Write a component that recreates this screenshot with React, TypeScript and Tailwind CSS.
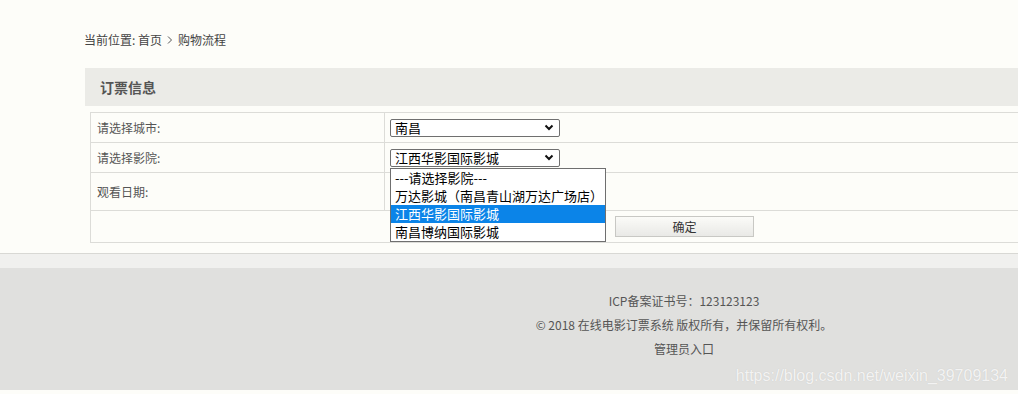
import React from "react";

const font = { fontFamily: '"Noto Sans CJK SC", "Noto Sans", sans-serif' };

function Chevron() {
  return (
    <svg width="10" height="7" viewBox="0 0 10 7" className="shrink-0">
      <path d="M1.5 1.5 L5 5 L8.5 1.5" fill="none" stroke="#111" strokeWidth="2" />
    </svg>
  );
}

function FakeSelect({ value }: { value: string }) {
  return (
    <div className="flex h-[18px] w-[170px] items-center justify-between rounded-[2px] border border-[#6f6f6f] bg-white pl-[4px] pr-[5px] text-[13px] leading-[16px] text-black">
      <span>{value}</span>
      <Chevron />
    </div>
  );
}

export default function App() {
  const cinemas = [
    "---请选择影院---",
    "万达影城（南昌青山湖万达广场店）",
    "江西华影国际影城",
    "南昌博纳国际影城",
  ];

  return (
    <div className="w-full min-h-screen overflow-hidden bg-[#fdfdf9]" style={font}>
      {/* Main content */}
      <div className="ml-[85px] w-[1200px] pt-[32px]">
        <div className="-ml-px flex items-center text-[12px] leading-[16px] text-[#444]">
          当前位置: 首页
          <svg width="10" height="10" viewBox="0 0 10 10" className="mx-[3px]">
            <path d="M3 1.5 L6.5 5 L3 8.5" fill="none" stroke="#555" strokeWidth="1" />
          </svg>
          购物流程
        </div>

        <div className="mt-[20px] flex h-[38px] items-center bg-[#ebebe7] pl-[15px] text-[14px] font-bold text-[#555]">
          订票信息
        </div>

        <table className="ml-[5px] mt-[6px] w-[1190px] border-collapse text-[12px] text-[#555]">
          <tbody>
            <tr className="h-[30px]">
              <td className="w-[294px] border border-[#dcdcd8] pl-[6px]">请选择城市:</td>
              <td className="border border-[#dcdcd8] pl-[5px]">
                <FakeSelect value="南昌" />
              </td>
            </tr>
            <tr className="h-[30px]">
              <td className="border border-[#dcdcd8] pl-[6px]">请选择影院:</td>
              <td className="border border-[#dcdcd8] pl-[5px]">
                <div className="relative">
                  <FakeSelect value="江西华影国际影城" />
                  {/* open dropdown list */}
                  <div className="absolute left-0 top-[19px] z-10 w-[216px] border border-[#6f6f6f] bg-white text-[13px] leading-[18px] text-black">
                    {cinemas.map((c, i) => (
                      <div
                        key={c}
                        className={
                          i === 2
                            ? "h-[18px] bg-[#0b84e8] pl-[4px] text-white"
                            : "h-[18px] pl-[4px]"
                        }
                      >
                        {c}
                      </div>
                    ))}
                  </div>
                </div>
              </td>
            </tr>
            <tr className="h-[38px]">
              <td className="border border-[#dcdcd8] pl-[6px]">观看日期:</td>
              <td className="border border-[#dcdcd8]"></td>
            </tr>
            <tr className="h-[32px]">
              <td colSpan={2} className="border border-[#dcdcd8]">
                <button className="ml-[524px] h-[21px] w-[139px] border border-[#c8c8c4] bg-gradient-to-b from-[#fbfbf8] to-[#e9e9e6] text-[12px] leading-[19px] text-[#333]">
                  确定
                </button>
              </td>
            </tr>
          </tbody>
        </table>
      </div>

      {/* Footer */}
      <div className="mt-[10px] border-t border-[#d8d8d4]">
        <div className="h-[14px] bg-[#f0f0ee]" />
        <div className="relative bg-[#e0e0de] pb-[29px] pt-[21px]">
          <div className="w-[1368px] text-center text-[12px] leading-[24px] text-[#555]">
            <p>ICP备案证书号：123123123</p>
            <p>© 2018 在线电影订票系统 版权所有，并保留所有权利。</p>
            <p>管理员入口</p>
          </div>
          <div
            className="absolute right-[10px] bottom-[5px] text-[16px] leading-[18px] text-white/80"
            style={{ fontFamily: '"Liberation Sans", Arial, sans-serif', textShadow: "0 0 1px rgba(0,0,0,0.15)" }}
          >
            https://blog.csdn.net/weixin_39709134
          </div>
        </div>
      </div>
    </div>
  );
}
